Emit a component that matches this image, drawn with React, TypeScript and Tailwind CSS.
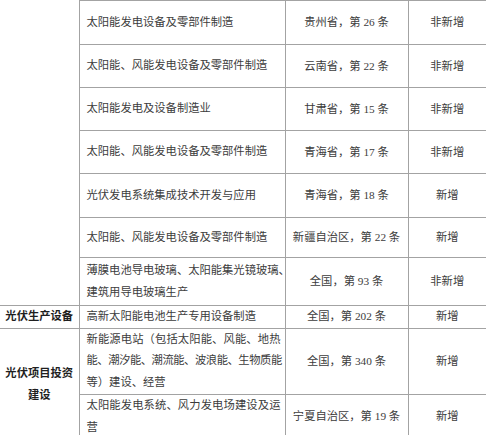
import React from 'react';

interface Row {
  lines: string[];
  source: string;
  status: string;
  height: string;
  tight?: boolean[];
}

const solarRows: Row[] = [
  { lines: ['太阳能发电设备及零部件制造'], source: '贵州省，第 26 条', status: '非新增', height: 'h-[44px]' },
  { lines: ['太阳能、风能发电设备及零部件制造'], source: '云南省，第 22 条', status: '非新增', height: 'h-[43px]' },
  { lines: ['太阳能发电及设备制造业'], source: '甘肃省，第 15 条', status: '非新增', height: 'h-[43px]' },
  { lines: ['太阳能、风能发电设备及零部件制造'], source: '青海省，第 17 条', status: '非新增', height: 'h-[43px]' },
  { lines: ['光伏发电系统集成技术开发与应用'], source: '青海省，第 18 条', status: '新增', height: 'h-[44px]' },
  { lines: ['太阳能、风能发电设备及零部件制造'], source: '新疆自治区，第 22 条', status: '新增', height: 'h-[40px]' },
  {
    lines: ['薄膜电池导电玻璃、太阳能集光镜玻璃、', '建筑用导电玻璃生产'],
    source: '全国，第 93 条',
    status: '非新增',
    height: 'h-[48px]',
  },
];

const cell = 'border border-[#a3a3a3] align-middle';

function ItemLines({ lines, tight }: { lines: string[]; tight?: boolean[] }) {
  return (
    <div className="leading-[21.7px]">
      {lines.map((line, i) => (
        <div
          key={i}
          className={`whitespace-nowrap ${
            i < lines.length - 1 ? 'text-justify [text-align-last:justify]' : ''
          } ${tight?.[i] ? 'tracking-[-0.45px]' : ''}`}
        >
          {line}
        </div>
      ))}
    </div>
  );
}

export default function App() {
  return (
    <div className="w-[496px] h-[435px] overflow-hidden bg-white font-['Liberation_Serif','Noto_Sans_CJK_SC',serif] text-[11.3px] text-[#3c3c3c]">
      <table className="table-fixed border-collapse w-[486px]">
        <colgroup>
          <col className="w-[79px]" />
          <col className="w-[206px]" />
          <col className="w-[123px]" />
          <col className="w-[78px]" />
        </colgroup>
        <tbody>
          {solarRows.map((row, i) => (
            <tr key={i} className={row.height}>
              {i === 0 && (
                <td rowSpan={solarRows.length} className="border-r border-b border-[#a3a3a3]" />
              )}
              <td className={`${cell} pl-[7px] pr-[4px]`}>
                <ItemLines lines={row.lines} />
              </td>
              <td className={`${cell} text-center`}>{row.source}</td>
              <td className={`${cell} border-r-0 text-center`}>{row.status}</td>
            </tr>
          ))}

          <tr className="h-[22px]">
            <td className="border-r border-b border-[#a3a3a3] text-center font-bold text-[#1f1f1f] leading-[21.7px]">
              光伏生产设备
            </td>
            <td className={`${cell} pl-[7px] pr-[4px]`}>
              <ItemLines lines={['高新太阳能电池生产专用设备制造']} />
            </td>
            <td className={`${cell} text-center`}>全国，第 202 条</td>
            <td className={`${cell} border-r-0 text-center`}>新增</td>
          </tr>

          <tr className="h-[65px]">
            <td
              rowSpan={2}
              className="border-r border-b border-[#a3a3a3] text-center font-bold text-[#1f1f1f] leading-[22px]"
            >
              <div>光伏项目投资</div>
              <div>建设</div>
            </td>
            <td className={`${cell} pl-[7px] pr-[4px]`}>
              <ItemLines
                lines={['新能源电站（包括太阳能、风能、地热', '能、潮汐能、潮流能、波浪能、生物质能', '等）建设、经营']}
                tight={[false, true, false]}
              />
            </td>
            <td className={`${cell} text-center`}>全国，第 340 条</td>
            <td className={`${cell} border-r-0 text-center`}>新增</td>
          </tr>

          <tr className="h-[45px]">
            <td className={`${cell} pl-[7px] pr-[4px]`}>
              <ItemLines lines={['太阳能发电系统、风力发电场建设及运', '营']} />
            </td>
            <td className={`${cell} text-center`}>宁夏自治区，第 19 条</td>
            <td className={`${cell} border-r-0 text-center`}>新增</td>
          </tr>
        </tbody>
      </table>
    </div>
  );
}
